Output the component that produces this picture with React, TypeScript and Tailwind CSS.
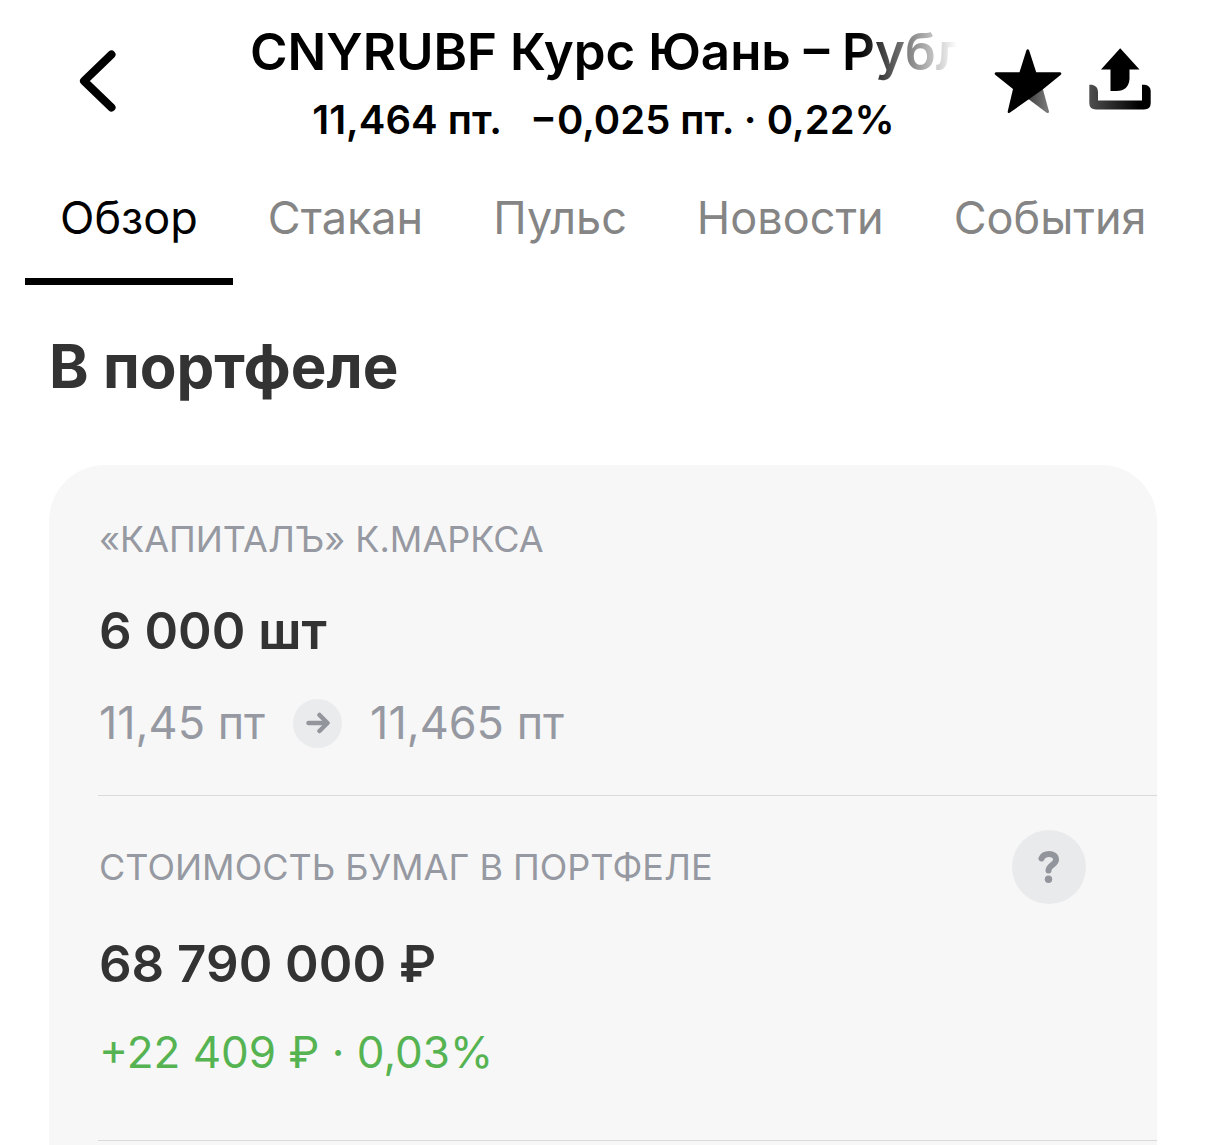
import { useState } from "react";

const instrument = {
  title: "CNYRUBF Курс Юань – Рубль",
  price: "11,464 пт.",
  change: "−0,025 пт. · 0,22%",
};

const tabs = ["Обзор", "Стакан", "Пульс", "Новости", "События"];

const BackIcon = () => (
  <svg width="40" height="66" viewBox="0 0 40 66" fill="none" aria-hidden="true">
    <path d="M34.500 6.500 7 33 34.500 59.500" stroke="#000" strokeWidth="8" strokeLinecap="round" strokeLinejoin="round" />
  </svg>
);

const StarIcon = () => (
  <svg width="70" height="67" viewBox="0 0 70 67" aria-hidden="true">
    <defs>
      <linearGradient id="star-fold" x1="36" y1="52" x2="54" y2="54" gradientUnits="userSpaceOnUse">
        <stop offset="0" stopColor="#444" />
        <stop offset="1" stopColor="#777" />
      </linearGradient>
    </defs>
    <path d="M49 38 56 63.500Q56 65.500 54 65L34 50Z" fill="url(#star-fold)" />
    <path
      d="M33.500 2Q34.700 .5 36 2L43.200 24.300H67Q69.500 25 67.500 27L50 41.300 17 64.500Q14.500 66 14.700 63.500L20 41 2.500 27Q.5 25 3 24.300H26.500Z"
      fill="#000"
    />
  </svg>
);

const ShareIcon = () => (
  <svg width="62" height="62" viewBox="0 0 62 62" aria-hidden="true">
    <defs>
      <linearGradient id="tray" x1="0" y1="36" x2="50" y2="36" gradientUnits="userSpaceOnUse">
        <stop offset="0" stopColor="#505050" />
        <stop offset="1" stopColor="#000" />
      </linearGradient>
    </defs>
    <path d="M31.200 .3 50.500 21.500H40.500V31Q39.500 43 27.500 43H21.500V21.500H12Z" fill="#000" />
    <path d="M.3 36.800H3Q9 38 9 44V52.500H53V36.800H56Q61.700 38 61.700 43V55Q61.700 61.500 55 61.500H7Q.3 61.500 .3 55Z" fill="url(#tray)" />
  </svg>
);

const ArrowIcon = () => (
  <svg width="24" height="22" viewBox="0 0 24 22" fill="none" aria-hidden="true">
    <path d="M2.500 11H21M13.500 3 21.500 11 13.500 19" stroke="#92959b" strokeWidth="4.500" strokeLinecap="round" strokeLinejoin="round" />
  </svg>
);

const HelpIcon = () => (
  <svg width="22" height="32" viewBox="0 0 22 32" fill="none" aria-hidden="true">
    <path
      d="M3.500 7.500C5 4 8 3 11 3C15 3 18 5 18 8.800C18 13.500 10.500 14.500 10.500 19.500"
      stroke="#92959b"
      strokeWidth="6"
      strokeLinecap="round"
    />
    <circle cx="10.500" cy="28.300" r="3.700" fill="#92959b" />
  </svg>
);

const App = () => {
  const [active, setActive] = useState("Обзор");

  return (
    <div className="min-h-screen bg-white flex flex-col font-['Inter','Liberation_Sans',sans-serif]">
      <header className="flex items-start pt-5">
        <div className="w-[250px] shrink-0 pl-[77px] pt-7">
          <button type="button" aria-label="Назад" className="block">
            <BackIcon />
          </button>
        </div>

        <div className="flex-1 min-w-0">
          <h1 className="overflow-hidden whitespace-nowrap text-[51px] leading-[64px] font-semibold text-black [mask-image:linear-gradient(to_right,#000_86%,transparent)]">
            {instrument.title}
          </h1>
          <p className="mt-3 flex justify-center gap-7 whitespace-nowrap text-[40px] leading-[48px] font-semibold text-black">
            <span>{instrument.price}</span>
            <span>{instrument.change}</span>
          </p>
        </div>

        <div className="w-[249px] shrink-0 flex items-start justify-end gap-[26px] pr-[55px] pt-7">
          <button type="button" aria-label="В избранное">
            <StarIcon />
          </button>
          <button type="button" aria-label="Поделиться">
            <ShareIcon />
          </button>
        </div>
      </header>

      <nav className="mt-11 flex px-[25px]">
        {tabs.map((tab) => (
          <button
            key={tab}
            type="button"
            onClick={() => setActive(tab)}
            className={`px-[35px] pb-[30px] border-b-[7px] text-[45px] leading-[60px] whitespace-nowrap ${
              active === tab ? "border-black text-black" : "border-transparent text-[#858585]"
            }`}
          >
            {tab}
          </button>
        ))}
      </nav>

      <main className="flex-1 flex flex-col px-[49px]">
        <h2 className="mt-[45px] text-[60px] leading-[72px] font-bold text-[#333333]">В портфеле</h2>

        <div className="mt-[63px] flex-1 rounded-t-[56px] bg-[#f7f7f7] pl-[49px]">
          {/* Position */}
          <section className="border-b border-[#d9dadc] pl-px pt-[50px] pb-11">
            <h3 className="text-[36px] leading-[48px] text-[#9699a1]">«КАПИТАЛЪ» К.МАРКСА</h3>
            <p className="mt-9 text-[51px] leading-[64px] font-semibold text-[#333333]">6 000 шт</p>
            <div className="mt-8 flex items-center gap-7 text-[45px] leading-[56px] text-[#9699a1]">
              <span>11,45 пт</span>
              <span className="size-[49px] rounded-full bg-[#eaebed] flex items-center justify-center">
                <ArrowIcon />
              </span>
              <span>11,465 пт</span>
            </div>
          </section>

          {/* Value */}
          <section className="border-b border-[#d9dadc] pl-px pt-[34px] pb-[60px]">
            <div className="flex items-center justify-between pr-[71px]">
              <h3 className="text-[36px] leading-[48px] text-[#9699a1]">СТОИМОСТЬ БУМАГ В ПОРТФЕЛЕ</h3>
              <button
                type="button"
                aria-label="Подробнее о стоимости"
                className="size-[74px] rounded-full bg-[#e9eaec] flex items-center justify-center"
              >
                <HelpIcon />
              </button>
            </div>
            <p className="mt-7 text-[51px] leading-[64px] font-semibold text-[#333333]">68 790 000 ₽</p>
            <p className="mt-7 text-[44px] leading-[56px] text-[#56b352]">+22 409 ₽ · 0,03%</p>
          </section>
        </div>
      </main>
    </div>
  );
};

export default App;
